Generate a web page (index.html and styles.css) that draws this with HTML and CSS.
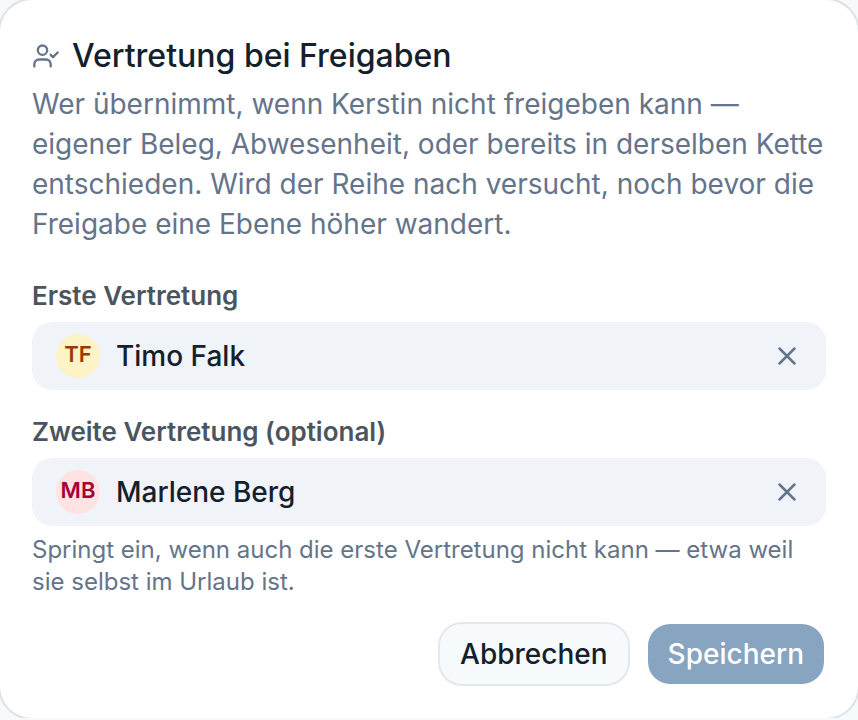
FILE: index.html
```html
<!DOCTYPE html>
<html lang="de">
<head>
    <meta charset="UTF-8">
    <meta name="viewport" content="width=device-width, initial-scale=1.0">
    <title>Vertretung bei Freigaben</title>
    <link rel="stylesheet" href="styles.css">
</head>
<body>
    <form class="card">
        <header class="card-header">
            <h2 class="card-title">
                <svg class="title-icon" viewBox="0 0 24 24" aria-hidden="true">
                    <path d="m16 11 2 2 4-4"/>
                    <path d="M16 21v-2a4 4 0 0 0-4-4H6a4 4 0 0 0-4 4v2"/>
                    <circle cx="9" cy="7" r="4"/>
                </svg>
                Vertretung bei Freigaben
            </h2>
            <p class="card-description">Wer übernimmt, wenn Kerstin nicht freigeben kann — eigener Beleg, Abwesenheit, oder bereits in derselben Kette entschieden. Wird der Reihe nach versucht, noch bevor die Freigabe eine Ebene höher wandert.</p>
        </header>

        <div class="fields">
            <div class="field" role="group" aria-labelledby="first-label">
                <span class="field-label" id="first-label">Erste Vertretung</span>
                <div class="person">
                    <span class="avatar avatar-yellow">TF</span>
                    <span class="person-name">Timo Falk</span>
                    <button type="button" class="remove" aria-label="Timo Falk entfernen">
                        <svg viewBox="0 0 24 24" aria-hidden="true"><path d="M18 6 6 18M6 6l12 12"/></svg>
                    </button>
                </div>
            </div>

            <div class="field" role="group" aria-labelledby="second-label">
                <span class="field-label" id="second-label">Zweite Vertretung (optional)</span>
                <div class="person">
                    <span class="avatar avatar-red">MB</span>
                    <span class="person-name">Marlene Berg</span>
                    <button type="button" class="remove" aria-label="Marlene Berg entfernen">
                        <svg viewBox="0 0 24 24" aria-hidden="true"><path d="M18 6 6 18M6 6l12 12"/></svg>
                    </button>
                </div>
                <p class="field-hint">Springt ein, wenn auch die erste Vertretung nicht kann — etwa weil sie selbst im Urlaub ist.</p>
            </div>
        </div>

        <footer class="card-footer">
            <button type="button" class="btn btn-outline">Abbrechen</button>
            <button type="submit" class="btn btn-primary">Speichern</button>
        </footer>
    </form>
</body>
</html>
```
FILE: styles.css
```css
* {
    box-sizing: border-box;
}

body {
    margin: 0;
    font-family: Inter, sans-serif;
    background-color: #f6fafd;
    color: #14202b;
}

.card {
    padding: 32px;
    background-color: #fff;
    border-radius: 32px;
    box-shadow: 0 0 0 2px #dde2e6;
}

.card-header {
    margin-bottom: 34px;
}

.card-title {
    display: flex;
    align-items: center;
    gap: 12px;
    margin: 0 0 4px;
    font-size: 32px;
    line-height: 48px;
    font-weight: 500;
}

svg {
    display: block;
    fill: none;
    stroke: currentColor;
    stroke-width: 2;
    stroke-linecap: round;
    stroke-linejoin: round;
}

.title-icon {
    width: 28px;
    height: 28px;
    color: #64748b;
}

.card-description {
    margin: 0;
    font-size: 28px;
    line-height: 40px;
    color: #64748b;
}

.fields {
    display: flex;
    flex-direction: column;
    gap: 24px;
}

.field {
    display: flex;
    flex-direction: column;
    gap: 8px;
}

.field-label {
    font-size: 26px;
    line-height: 36px;
    font-weight: 600;
    color: #4a5560;
}

.person {
    display: flex;
    align-items: center;
    gap: 16px;
    padding: 12px 24px;
    border-radius: 20px;
    background-color: #f0f4f9;
}

.avatar {
    display: flex;
    align-items: center;
    justify-content: center;
    width: 44px;
    height: 44px;
    padding-bottom: 4px;
    border-radius: 50%;
    font-size: 22px;
    font-weight: 600;
}

.avatar-yellow {
    background-color: #fef3c6;
    color: #973c00;
}

.avatar-red {
    background-color: #ffe2e2;
    color: #a50036;
}

.person-name {
    flex: 1;
    font-size: 28px;
    line-height: 40px;
    font-weight: 500;
}

.remove {
    padding: 0;
    border: none;
    background: none;
    color: #64748b;
    cursor: pointer;
}

.remove svg {
    width: 30px;
    height: 30px;
}

.field-hint {
    margin: 0;
    font-size: 24px;
    line-height: 32px;
    color: #64748b;
}

.card-footer {
    display: flex;
    justify-content: flex-end;
    gap: 16px;
    margin-top: 24px;
}

.btn {
    height: 64px;
    padding: 0 20px;
    border: 2px solid transparent;
    border-radius: 24px;
    background-clip: padding-box;
    font-family: inherit;
    font-size: 28px;
    font-weight: 500;
    cursor: pointer;
}

.btn-outline {
    background-color: #f6fafd;
    border-color: #e2e8f0;
    color: #14202b;
}

.btn-primary {
    background-color: #87a4c1;
    color: #fff;
}
```
